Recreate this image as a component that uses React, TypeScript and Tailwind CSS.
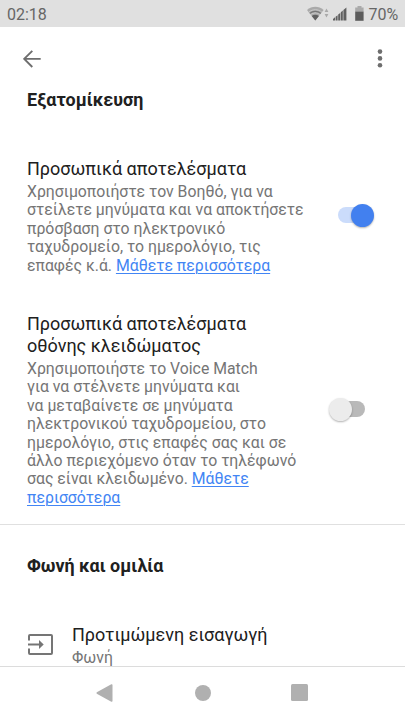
import React from 'react';

interface SwitchProps {
    checked: boolean;
}

const Switch: React.FC<SwitchProps> = ({ checked }) => (
    <div className="relative w-9 h-6 flex items-center" role="switch" aria-checked={checked}>
        <div className={`w-[31px] h-4 rounded-full ${checked ? 'ml-0 bg-[#cbdcfb]' : 'ml-[5px] bg-[#b9b9b9]'}`} />
        <div className={`absolute top-[1px] w-[23px] h-[23px] rounded-full shadow-[0_1px_2px_rgba(0,0,0,0.3)] ${checked ? 'right-0 bg-[#4280ef]' : 'left-0 bg-[#ececec]'}`} />
    </div>
);

const StatusBar: React.FC = () => (
    <div className="h-[27px] shrink-0 bg-[#e0e0e0] flex items-center justify-between pl-[7px] pr-[7px] text-[#666666]">
        <span className="text-base leading-[27px] pt-px">02:18</span>
        <div className="flex items-center">
            <svg width="22" height="16" viewBox="0 0 22 16">
                <path d="M0 4.100C4.800-.3 11.800-.3 16.600 4.100L8.300 14.500Z" fill="#aaa" />
                <path d="M1.800 6.100C5.600 2.900 11 2.900 14.800 6.100M3.800 8.600C6.400 6.400 10.200 6.400 12.800 8.600" fill="none" stroke="#c9c9c9" strokeWidth="1" />
                <path d="M2.800 7.400C6 4.600 10.600 4.600 13.800 7.400" fill="none" stroke="#777" strokeWidth="1.200" />
                <path d="M4.700 9.900C6.900 8.200 9.700 8.200 11.900 9.900L8.300 14.500Z" fill="#606060" />
                <path d="M17.600 6L19.500 2.500L21.400 6ZM17.600 8L19.500 11.500L21.400 8Z" fill="#aaa" />
            </svg>
            <svg className="ml-1" width="14" height="14" viewBox="0 0 14 14" fill="#606060">
                <path d="M0 13.500V12L2 10.300V13.500ZM2.600 13.500V9.800L4.600 8.200V13.500ZM5.200 13.500V7.600L7.200 6V13.500ZM7.800 13.500V5.300L9.800 3.600V13.500ZM10.400 13.500V2.900L13.400 .4V13.500Z" />
            </svg>
            <svg className="ml-2" width="9" height="15" viewBox="0 0 9 15">
                <path d="M2.500 0H6.500V1.500H8.600V5.500H.2V1.500H2.500Z" fill="#aaa" />
                <path d="M.2 5.500H8.600V14.800H.2Z" fill="#5c5c5c" />
            </svg>
            <span className="ml-[5px] text-base leading-[27px] pt-px tracking-[-0.1px]">70%</span>
        </div>
    </div>
);

const Toolbar: React.FC = () => (
    <div className="h-[62px] shrink-0 flex items-center justify-between pl-[23px] pr-[21px]">
        <svg width="18" height="19" viewBox="0 0 18 19" fill="none" stroke="#6e6e6e" strokeWidth="1.900">
            <path d="M17.700 9.900H1.500M9.300 1.800L1.200 9.900L9.300 18" />
        </svg>
        <svg width="8" height="20" viewBox="0 0 8 20" fill="#6e6e6e">
            <circle cx="4" cy="3.600" r="2.300" />
            <circle cx="4" cy="10.400" r="2.300" />
            <circle cx="4" cy="17.200" r="2.300" />
        </svg>
    </div>
);

interface SettingProps {
    title: React.ReactNode;
    checked: boolean;
    children: React.ReactNode;
}

const Setting: React.FC<SettingProps> = ({ title, checked, children }) => (
    <div className="flex items-center justify-between pl-[27px]">
        <div className="whitespace-nowrap">
            <h3 className="text-lg leading-[22px] text-[#202020]">{title}</h3>
            <p className="mt-[3px] text-[15.8px] leading-[18.4px] text-[#757575]">{children}</p>
        </div>
        <div className={checked ? 'mr-[31px] mb-[3px]' : 'mr-[40px] mb-0.5'}>
            <Switch checked={checked} />
        </div>
    </div>
);

const linkClass = 'text-[#4285f4] underline underline-offset-2 decoration-1';

const App: React.FC = () => {
    return (
        <div className="w-full h-screen overflow-hidden flex flex-col bg-white font-['Roboto',sans-serif]">
            <StatusBar />
            <Toolbar />
            <main className="flex-1 min-h-0 overflow-hidden">
                <h2 className="pl-[27px] text-[17.9px] leading-[21px] font-bold text-[#202020]">Εξατομίκευση</h2>
                <div className="mt-12">
                    <Setting title="Προσωπικά αποτελέσματα" checked>
                        Χρησιμοποιήστε τον Βοηθό, για να<br />
                        στείλετε μηνύματα και να αποκτήσετε<br />
                        πρόσβαση στο ηλεκτρονικό<br />
                        ταχυδρομείο, το ημερολόγιο, τις<br />
                        επαφές κ.ά. <a className={linkClass}>Μάθετε περισσότερα</a>
                    </Setting>
                </div>
                <div className="mt-[38px]">
                    <Setting title={<>Προσωπικά αποτελέσματα<br />οθόνης κλειδώματος</>} checked={false}>
                        Χρησιμοποιήστε το Voice Match<br />
                        για να στέλνετε μηνύματα και<br />
                        να μεταβαίνετε σε μηνύματα<br />
                        ηλεκτρονικού ταχυδρομείου, στο<br />
                        ημερολόγιο, στις επαφές σας και σε<br />
                        άλλο περιεχόμενο όταν το τηλέφωνό<br />
                        σας είναι κλειδωμένο. <a className={linkClass}>Μάθετε<br />περισσότερα</a>
                    </Setting>
                </div>
                <div className="mt-[17px] border-t border-[#e0e0e0]">
                    <h2 className="pl-[27px] pt-[30px] text-[17.9px] leading-[21px] font-bold text-[#202020]">Φωνή και ομιλία</h2>
                    <div className="mt-12 flex pl-7">
                        <svg className="mt-[10px] shrink-0" width="25" height="21" viewBox="0 0 25 21" fill="none" stroke="#757575" strokeWidth="2">
                            <path d="M1 6.500V2Q1 1 2 1H23Q24 1 24 2V19Q24 20 23 20H2Q1 20 1 19V14.500" />
                            <path d="M0 10.500H12" />
                            <path d="M11 6L15.700 10.500L11 15Z" fill="#757575" stroke="none" />
                        </svg>
                        <div className="ml-[19px] whitespace-nowrap">
                            <h3 className="text-lg leading-[22px] text-[#202020]">Προτιμώμενη εισαγωγή</h3>
                            <p className="mt-[3px] text-[15.8px] leading-[18px] text-[#757575]">Φωνή</p>
                        </div>
                    </div>
                </div>
            </main>
            <nav className="h-[54px] shrink-0 border-t border-[#dcdcdc] flex items-center pl-[96px] pb-[2px] bg-white text-[#b0b0b0]">
                <svg width="17" height="18" viewBox="0 0 17 18" fill="currentColor">
                    <path d="M.8 8.300L15.300 .3Q16.500 0 16.500 1V17Q16.500 18 15.300 17.700L.8 9.700Q0 9 .8 8.300Z" />
                </svg>
                <div className="ml-[81.500px] w-4 h-4 rounded-full bg-[#b0b0b0]" />
                <div className="ml-[80.500px] w-[17px] h-[17px] rounded-[1.5px] bg-[#b0b0b0]" />
            </nav>
        </div>
    );
};

export default App;
